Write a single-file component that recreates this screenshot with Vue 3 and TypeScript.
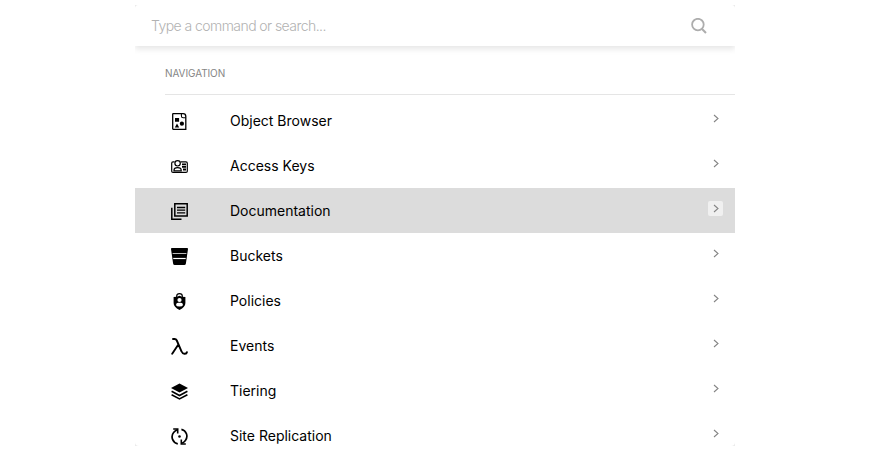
<script setup lang="ts">
import { ref } from 'vue'

interface Command {
  name: string
  icon: string
}

const query = ref('')
const active = ref(2)

const commands: Command[] = [
  { name: 'Object Browser', icon: 'browser' },
  { name: 'Access Keys', icon: 'keys' },
  { name: 'Documentation', icon: 'docs' },
  { name: 'Buckets', icon: 'buckets' },
  { name: 'Policies', icon: 'policies' },
  { name: 'Events', icon: 'events' },
  { name: 'Tiering', icon: 'tiering' },
  { name: 'Site Replication', icon: 'replication' },
]
</script>

<template>
  <main class="page">
    <div class="frame">
      <section class="palette">
        <header class="search">
          <input v-model="query" class="search-input" type="text" placeholder="Type a command or search..." />
          <svg class="search-icon" viewBox="0 0 16 16" fill="none" stroke="#adadad" stroke-width="1.8">
            <circle cx="6.9" cy="6.6" r="5.8" />
            <path d="M10.8 10.7 15 15" stroke-width="2" />
          </svg>
        </header>
        <h2 class="group">NAVIGATION</h2>
        <ul class="list">
          <li
            v-for="(command, index) in commands"
            :key="command.name"
            class="row"
            :class="{ active: index === active }"
            @mouseenter="active = index"
          >
            <svg class="icon" viewBox="0 0 17 17">
              <g v-if="command.icon === 'browser'">
                <path d="M2.2.7h9.9q2.7 0 2.7 2.8v12.8H2.2q-.5 0-.5-.5V1.2q0-.5.5-.5z" fill="none" stroke="#000" stroke-width="1.3" />
                <path d="M10.4.9v2q0 1.8 1.8 1.8h2.5" fill="none" stroke="#000" stroke-width="1.1" />
                <path d="M4 5h4.1v3.7H4zM6 10.5l2.2 3.9H3.8z" />
                <circle cx="10.9" cy="10.7" r="2.1" />
              </g>
              <g v-else-if="command.icon === 'keys'" fill="none" stroke="#000" stroke-width="1.2">
                <path d="M3.5 3.9H2Q.7 3.9.7 5.2v8q0 1.2 1.3 1.2h13q1.3 0 1.3-1.2v-8q0-1.3-1.3-1.3H9.6" />
                <circle cx="6.6" cy="5.3" r="2.7" />
                <path d="M3 12.8v-.5q0-2.7 3.6-2.7t3.6 2.7v.5z" />
                <path d="M11 6.4h4M11 8.9h4M12 11.5h3" stroke-width="1.8" />
              </g>
              <g v-else-if="command.icon === 'docs'" fill="none" stroke="#000" stroke-width="1.5">
                <path d="M3.8.8h12.4V13H3.8zM.8 4.8v11.4h9.7" />
                <path d="M6 4.5h8.2M6 7.1h8.2M6 9.8h8.2" stroke-width="1.3" />
              </g>
              <g v-else-if="command.icon === 'buckets'">
                <path d="M.8 0h15.4q.9 0 .8 1l-2.1 14.4q-.2 1.5-1.7 1.5H3.8q-1.5 0-1.7-1.5L0 1Q-.1 0 .8 0z" />
                <path d="M1.6 5.5h13.8" fill="none" stroke="#bbb" stroke-width="1.2" />
                <path d="M2.2 10.5h12.5" fill="none" stroke="#fff" stroke-width="1.2" />
              </g>
              <g v-else-if="command.icon === 'policies'">
                <path d="M5.7 4.2V3.1Q5.7.6 8.5.6t2.8 2.5v1.1" fill="none" stroke="#000" stroke-width="1.2" />
                <path d="M2.6 4Q6.2 4 8.5 2.8 10.8 4 14.4 4v6q0 4.3-5.9 6.9Q2.6 14.3 2.6 10z" />
                <circle cx="8.5" cy="7" r="2.1" fill="#fff" />
                <path d="M5 12q.2-2.2 2.1-2.2h2.8q1.9 0 2.1 2.2-.3 1.5-3.5 1.5T5 12z" fill="#fff" />
              </g>
              <path
                v-else-if="command.icon === 'events'"
                d="M2 1h1.5q1.6 0 2.3 1.5l4.8 11q.9 2.2 2.7 2.2h.7q1.6 0 1.9-1.5M7.2 6.7 1.2 15.8"
                fill="none"
                stroke="#000"
                stroke-width="1.9"
                stroke-linecap="round"
              />
              <g v-else-if="command.icon === 'tiering'">
                <path d="M8.5.4 17 4.9 8.5 9.4 0 4.9z" />
                <path d="m.6 8.3 7.9 4.2 7.9-4.2M.6 11.7l7.9 4.2 7.9-4.2" fill="none" stroke="#000" stroke-width="1.6" />
              </g>
              <g v-else>
                <path d="M6.8 15.8A7 7 0 0 1 2.6 4.6Q3.8 3 6 1.8M10.4 1.3a7 7 0 0 1 4 11.1q-1.2 1.6-3.3 2.8" fill="none" stroke="#000" stroke-width="1.7" />
                <path d="M2.2 1h4.5v4.4M14.8 16h-4.5v-4.4" fill="none" stroke="#000" stroke-width="1.6" />
                <circle cx="8.5" cy="8.5" r="1.3" />
              </g>
            </svg>
            <span class="label">{{ command.name }}</span>
            <span class="arrow">
              <svg viewBox="0 0 15 15" fill="none" stroke="#858585" stroke-width="1.1">
                <path d="m6 4 4 3.5L6 11" />
              </svg>
            </span>
          </li>
        </ul>
      </section>
    </div>
  </main>
</template>

<style>
body {
  background: #fff;
}
</style>

<style scoped>
.page {
  display: flex;
  justify-content: center;
  box-sizing: border-box;
  height: 450px;
  padding: 5px 0 4px;
  padding-left: 1px;
  font-family: Inter, 'Liberation Sans', sans-serif;
}
.frame {
  width: 600px;
  height: 441px;
  background: #eaeaea;
}
.palette {
  height: 441px;
  overflow: hidden;
  border-radius: 4px;
  background: #fff;
}
.search {
  display: flex;
  align-items: center;
  box-sizing: border-box;
  height: 41px;
  padding: 0 28px 0 16px;
  background: #fff;
  box-shadow: 0 3px 6px rgba(0, 0, 0, 0.1);
}
.search-input {
  flex: 1;
  min-width: 0;
  padding: 0;
  border: 0;
  outline: 0;
  background: transparent;
  color: #000;
  font: 300 14px/20px Inter, 'Liberation Sans', sans-serif;
  letter-spacing: -0.56px;
}
.search-input::placeholder {
  color: #b2b2b2;
  opacity: 1;
}
.search-icon {
  width: 16px;
  height: 16px;
}
.group {
  box-sizing: border-box;
  height: 49px;
  margin: 0 0 3px 30px;
  padding-top: 20px;
  border-bottom: 1px solid #e5e5e5;
  color: #858585;
  font-size: 10px;
  font-weight: 400;
  line-height: 15px;
  letter-spacing: -0.08px;
}
.list {
  margin: 0;
  padding: 0;
  list-style: none;
}
.row {
  display: flex;
  align-items: center;
  box-sizing: border-box;
  height: 45px;
  padding: 0 12px 0 36px;
}
.active {
  background: #dcdcdc;
}
.icon {
  width: 17px;
  height: 17px;
  margin-top: 2px;
}
.label {
  flex: 1;
  margin-left: 42px;
  color: #000;
  font-size: 14px;
  line-height: 20px;
}
.arrow {
  width: 15px;
  height: 15px;
  margin-bottom: 4px;
  border-radius: 2px;
}
.arrow svg {
  display: block;
}
.active .arrow {
  background: #f0f0f0;
}
</style>
